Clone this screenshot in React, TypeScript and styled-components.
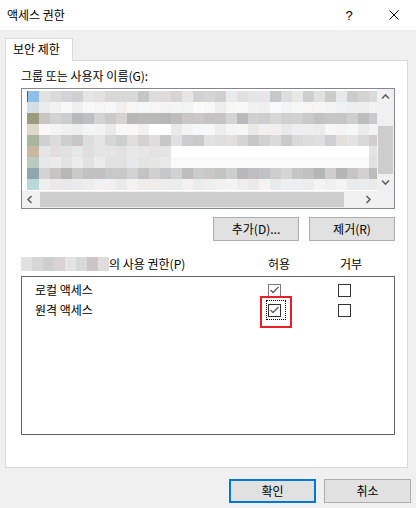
import styled, { createGlobalStyle } from "styled-components";

const GlobalStyle = createGlobalStyle`
  html, body {
    margin: 0;
    padding: 0;
  }
  body {
    width: 416px;
    height: 508px;
    overflow: hidden;
    background: #f0f0f0;
    font-family: "Noto Sans CJK KR", "Noto Sans", sans-serif;
    font-size: 12px;
    color: #000;
  }
  * {
    box-sizing: border-box;
  }
`;

const Window = styled.div`
  width: 416px;
  height: 508px;
  display: flex;
  flex-direction: column;
  background: #f0f0f0;
`;

const TitleBar = styled.div`
  height: 30px;
  background: #fff;
  display: flex;
  align-items: center;
`;

const Title = styled.div`
  flex: 1;
  padding-left: 7px;
  padding-bottom: 1px;
  line-height: 16px;
`;

const CaptionButton = styled.div<{ $w: number }>`
  width: ${(p) => p.$w}px;
  height: 30px;
  display: flex;
  align-items: center;
  justify-content: center;
  font-family: "Liberation Sans", sans-serif;
  font-size: 13px;
`;

const Body = styled.div`
  padding: 8px 0 0 5px;
  display: flex;
  flex-direction: column;
`;

const TabStrip = styled.div`
  display: flex;
`;

const Tab = styled.div`
  width: 68px;
  height: 23px;
  margin-bottom: -1px;
  padding: 0 0 2px 7px;
  display: flex;
  align-items: center;
  border: 1px solid #d9d9d9;
  border-bottom: none;
  background: #fff;
  position: relative;
  z-index: 1;
  line-height: 16px;
`;

const Panel = styled.div`
  width: 403px;
  height: 408px;
  border: 1px solid #d9d9d9;
  background: #fff;
  padding: 7px 12px 0 15px;
  display: flex;
  flex-direction: column;
`;

const Label = styled.div`
  height: 16px;
  line-height: 16px;
  white-space: nowrap;
`;

const ListBox = styled.div`
  margin-top: 4px;
  height: 121px;
  border: 1px solid #828790;
  background: #fff;
  display: grid;
  grid-template-columns: 1fr 17px;
  grid-template-rows: 1fr 17px;
`;

const Items = styled.div`
  overflow: hidden;
  padding: 2px 0 0 5px;
  display: flex;
  flex-direction: column;
`;

const MosaicRow = styled.div`
  display: flex;
  height: 11px;
  flex: none;
`;

const Cell = styled.div<{ $w: number; $caret?: boolean }>`
  width: ${(p) => p.$w}px;
  height: 11px;
  flex: none;
  border-left: ${(p) => (p.$caret ? "1px solid #5f5f5f" : "none")};
`;

const VScroll = styled.div`
  background: #f0f0f0;
  display: flex;
  flex-direction: column;
  align-items: center;
`;

const HScroll = styled.div`
  background: #f0f0f0;
  display: flex;
  align-items: center;
`;

const Corner = styled.div`
  background: #f0f0f0;
`;

const Arrow = styled.div`
  width: 17px;
  height: 17px;
  flex: none;
  display: flex;
  align-items: center;
  justify-content: center;
`;

const Track = styled.div<{ $vertical?: boolean }>`
  flex: 1;
  display: flex;
  flex-direction: ${(p) => (p.$vertical ? "column" : "row")};
  align-items: center;
`;

const Thumb = styled.div<{ $vertical?: boolean; $offset: number; $len: number }>`
  background: #cdcdcd;
  ${(p) =>
    p.$vertical
      ? `width: 15px; height: ${p.$len}px; margin-top: ${p.$offset}px;`
      : `height: 15px; width: ${p.$len}px; margin-left: ${p.$offset}px;`}
`;

const ButtonRow = styled.div<{ $top: number; $gap: number; $right?: number }>`
  margin-top: ${(p) => p.$top}px;
  padding-right: ${(p) => p.$right ?? 0}px;
  display: flex;
  justify-content: flex-end;
  gap: ${(p) => p.$gap}px;
`;

const Button = styled.div<{ $w: number; $default?: boolean }>`
  width: ${(p) => p.$w}px;
  height: 24px;
  background: #e1e1e1;
  border: ${(p) => (p.$default ? "2px solid #0078d7" : "1px solid #adadad")};
  display: flex;
  align-items: center;
  justify-content: center;
  line-height: 16px;
  padding-bottom: 1px;
`;

const HeaderRow = styled.div`
  margin-top: 15px;
  height: 16px;
  line-height: 16px;
  display: grid;
  grid-template-columns: 247px 70px 1fr;
  white-space: nowrap;
`;

const OwnerName = styled.span`
  display: inline-flex;
  vertical-align: top;
  margin-top: 1px;
  height: 14px;
`;

const NameCell = styled.span`
  width: 11px;
  height: 14px;
`;

const DenyHead = styled.div`
  padding-left: 2px;
`;

const PermBox = styled.div`
  margin-top: 4px;
  height: 159px;
  border: 1px solid #646464;
  background: #fff;
  padding: 3px 0 0 13px;
`;

const PermRow = styled.div`
  height: 20px;
  display: grid;
  grid-template-columns: 233px 70px 1fr;
  align-items: center;
  line-height: 16px;
`;

const CheckSlot = styled.div`
  position: relative;
  width: 13px;
  height: 13px;
`;

const Box = styled.div<{ $border: string }>`
  width: 13px;
  height: 13px;
  border: 1px solid ${(p) => p.$border};
  background: #fff;
  display: flex;
`;

const FocusRing = styled.div`
  position: absolute;
  left: -2px;
  top: -4px;
  width: 20px;
  height: 20px;
  border: 1px dotted #000;
`;

const Highlight = styled.div`
  position: absolute;
  left: -8px;
  top: -8px;
  width: 32px;
  height: 32px;
  border: 2px solid #e8202a;
`;

const Chevron = ({ dir }: { dir: "up" | "down" | "left" | "right" }) => {
  const pts = {
    up: "1,5.5 4.5,2 8,5.5",
    down: "1,2.5 4.5,6 8,2.5",
    left: "5.5,1 2,4.5 5.5,8",
    right: "2.5,1 6,4.5 2.5,8",
  }[dir];
  return (
    <svg width="9" height="9" viewBox="0 0 9 9">
      <polyline points={pts} fill="none" stroke="#606060" strokeWidth="1.6" />
    </svg>
  );
};

const Check = ({ color }: { color: string }) => (
  <svg width="11" height="11" viewBox="0 0 11 11">
    <polyline points="1.5,5 4,7.5 9.5,2" fill="none" stroke={color} strokeWidth="1.3" />
  </svg>
);

function CheckBox({
  checked,
  border = "#333",
  focused,
}: {
  checked?: boolean;
  border?: string;
  focused?: boolean;
}) {
  return (
    <CheckSlot>
      <Box $border={border}>{checked && <Check color="#5c5c5c" />}</Box>
      {focused && <FocusRing />}
      {focused && <Highlight />}
    </CheckSlot>
  );
}

// blurred user list: a mosaic of greys, one spec per row
const rowSpecs = [
  { first: "#8fc0e8", base: 0xd8, spread: 0x12 },
  { first: "#d5dde5", base: 0xf3, spread: 0x06 },
  { first: "#9b9b7f", base: 0xc6, spread: 0x10 },
  { first: "#ddd7cc", base: 0xf0, spread: 0x08, whiteFrom: 11, whiteTo: 12 },
  { first: "#a9b59f", base: 0xd4, spread: 0x10 },
  { first: "#c8b89f", base: 0xe2, spread: 0x06, whiteFrom: 13, whiteTo: 30 },
  { first: "#bcc9bf", base: 0xe6, spread: 0x06, whiteFrom: 13, whiteTo: 30 },
  { first: "#8fa6ae", base: 0xc4, spread: 0x10 },
  { first: "#b9d9d9", base: 0xee, spread: 0x05 },
];

const rand = (i: number) => {
  const x = Math.sin(i * 12.9898 + 78.233) * 43758.5453;
  return x - Math.floor(x);
};

const clamp = (v: number) => Math.max(0, Math.min(255, Math.round(v)));
const hex = (r: number, g: number, b: number) =>
  "#" + [r, g, b].map((v) => clamp(v).toString(16).padStart(2, "0")).join("");

const mosaic = rowSpecs.map((spec, r) =>
  Array.from({ length: 32 }, (_, c) => {
    if (c === 0) return spec.first;
    if (spec.whiteFrom && c >= spec.whiteFrom && c <= (spec.whiteTo ?? 0))
      return r === 6 ? "#fafafa" : "#ffffff";
    const seed = r * 100 + c;
    const n = (rand(seed) - 0.5) * 2 * spec.spread;
    const t = (rand(seed + 7) - 0.5) * 6;
    const l = spec.base + n;
    return hex(l + t, l, l - t * 0.3 + (rand(seed + 3) - 0.5) * 4);
  })
);

const ownerCells = [
  "#e2e0e0",
  "#d6d6d6",
  "#cfcfcf",
  "#d9d3d3",
  "#e4e4e4",
  "#d8d8d8",
  "#cdc6c6",
  "#e0dcdc",
];

export default function App() {
  return (
    <Window>
      <GlobalStyle />
      <TitleBar>
        <Title>액세스 권한</Title>
        <CaptionButton $w={46}>?</CaptionButton>
        <CaptionButton $w={44}>
          <svg width="10" height="10" viewBox="0 0 10 10">
            <path d="M0.5 0.5 L9.5 9.5 M9.5 0.5 L0.5 9.5" stroke="#000" strokeWidth="1" />
          </svg>
        </CaptionButton>
      </TitleBar>

      <Body>
        <TabStrip>
          <Tab>보안 제한</Tab>
        </TabStrip>
        <Panel>
          <Label>그룹 또는 사용자 이름(G):</Label>
          <ListBox>
            <Items>
              {mosaic.map((row, r) => (
                <MosaicRow key={r}>
                  {row.map((bg, c) => (
                    <Cell
                      key={c}
                      $w={c === 0 ? 12 : 11}
                      $caret={r === 0 && c === 0}
                      style={{ background: bg }}
                    />
                  ))}
                </MosaicRow>
              ))}
            </Items>
            <VScroll>
              <Arrow>
                <Chevron dir="up" />
              </Arrow>
              <Track $vertical>
                <Thumb $vertical $offset={20} $len={48} />
              </Track>
              <Arrow>
                <Chevron dir="down" />
              </Arrow>
            </VScroll>
            <HScroll>
              <Arrow>
                <Chevron dir="left" />
              </Arrow>
              <Track>
                <Thumb $offset={1} $len={304} />
              </Track>
              <Arrow>
                <Chevron dir="right" />
              </Arrow>
            </HScroll>
            <Corner />
          </ListBox>

          <ButtonRow $top={8} $gap={10}>
            <Button $w={86}>추가(D)...</Button>
            <Button $w={86}>제거(R)</Button>
          </ButtonRow>

          <HeaderRow>
            <div>
              <OwnerName>
                {ownerCells.map((c, i) => (
                  <NameCell key={i} style={{ background: c }} />
                ))}
              </OwnerName>
              의 사용 권한(P)
            </div>
            <div>허용</div>
            <DenyHead>거부</DenyHead>
          </HeaderRow>

          <PermBox>
            <PermRow>
              <div>로컬 액세스</div>
              <CheckBox checked border="#7a7a7a" />
              <CheckBox />
            </PermRow>
            <PermRow>
              <div>원격 액세스</div>
              <CheckBox checked focused />
              <CheckBox />
            </PermRow>
          </PermBox>
        </Panel>

        <ButtonRow $top={11} $gap={8} $right={5}>
          <Button $w={87} $default>
            확인
          </Button>
          <Button $w={87}>취소</Button>
        </ButtonRow>
      </Body>
    </Window>
  );
}
